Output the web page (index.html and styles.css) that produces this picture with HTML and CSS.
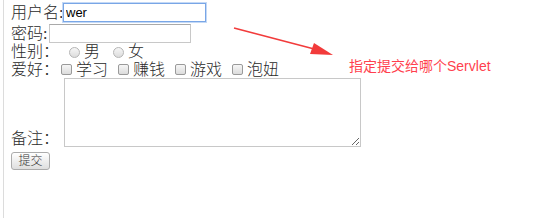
FILE: index.html
```html
<!DOCTYPE html>
<html lang="zh">
<head>
    <meta charset="UTF-8">
    <title>注册</title>
    <link rel="stylesheet" href="styles.css">
</head>
<body>
    <div class="page">
        <form class="reg-form" action="#">
            <div class="row row-user">
                <span class="label label-user">用户名:</span>
                <input type="text" class="field field-user" value="wer">
            </div>
            <div class="row row-pwd">
                <span class="label label-pwd">密码:</span>
                <input type="password" class="field field-pwd">
            </div>
            <div class="row row-sex">
                <span class="label">性别：</span>
                <input type="radio" name="sex" class="radio first">
                <span class="opt">男</span>
                <input type="radio" name="sex" class="radio">
                <span class="opt">女</span>
            </div>
            <div class="row row-hobby">
                <span class="label">爱好：</span>
                <input type="checkbox" class="check first">
                <span class="opt">学习</span>
                <input type="checkbox" class="check">
                <span class="opt">赚钱</span>
                <input type="checkbox" class="check">
                <span class="opt">游戏</span>
                <input type="checkbox" class="check">
                <span class="opt">泡妞</span>
            </div>
            <div class="row row-note">
                <span class="label">备注：</span>
                <textarea class="note"></textarea>
            </div>
            <div class="row row-submit">
                <button type="submit" class="submit">提交</button>
            </div>
        </form>

        <svg class="arrow" width="110" height="40" viewBox="0 0 110 40">
            <path d="M2 2 L86 24" stroke="#f23b3b" stroke-width="1.6" fill="none"/>
            <path d="M82 17 L101 29 L78 28 Z" fill="#f23b3b"/>
        </svg>
        <p class="note-text">指定提交给哪个Servlet</p>
    </div>
</body>
</html>
```

FILE: styles.css
```css
body {
    margin: 0;
    background: #fff;
    font-family: "Liberation Serif", "Noto Sans CJK SC", serif;
    color: #2a2a2a;
}
.page {
    position: relative;
    height: 218px;
    margin-left: 3px;
    border-left: 1px solid #dcdcdc;
    padding-left: 7px;
}
.reg-form {
    margin: 0;
    padding-top: 3px;
}
.row {
    display: flex;
    align-items: center;
}
.label,
.opt {
    font-size: 16px;
    line-height: 18px;
    font-weight: 300;
    white-space: nowrap;
}
.label {
    width: 48px;
}
.label-user {
    width: 52px;
}
.label-pwd {
    width: 38px;
}
.row-user {
    height: 19px;
}
.row-pwd {
    height: 19px;
    margin-top: 2px;
}
.row-sex {
    height: 18px;
}
.row-hobby {
    height: 17px;
}
.field {
    box-sizing: border-box;
    height: 19px;
    margin: 0;
    padding: 0 2px;
    border: 1px solid #c8c8c8;
    border-top-color: #a9a9a9;
    font-family: "Liberation Sans", Arial, sans-serif;
    font-size: 13px;
    color: #000;
    outline: none;
}
.field-user {
    width: 143px;
    border-color: #79a6e6;
    box-shadow: 0 0 0 1px #c4d9f6;
}
.field-pwd {
    width: 142px;
}
.radio,
.check {
    appearance: none;
    -webkit-appearance: none;
    box-sizing: border-box;
    width: 11px;
    height: 11px;
    margin: 0 4px 0 13px;
    border: 1px solid #b5b5b5;
    background: linear-gradient(#f6f6f6, #dcdcdc);
}
.radio {
    border-radius: 50%;
}
.radio.first {
    margin-left: 10px;
}
.check {
    border-radius: 2px;
    border-color: #9a9a9a;
    margin-left: 10px;
}
.check.first {
    margin-left: 2px;
}
.row-note {
    align-items: flex-end;
}
.row-note .label {
    width: 53px;
    line-height: 16px;
}
.note {
    box-sizing: border-box;
    width: 297px;
    height: 69px;
    margin: 0;
    border: 1px solid #c8c8c8;
    resize: both;
}
.row-submit {
    margin-top: 5px;
}
.submit {
    box-sizing: border-box;
    width: 39px;
    height: 18px;
    padding: 0;
    border: 1px solid #ababab;
    border-radius: 3px;
    background: linear-gradient(#ffffff, #dedede);
    font-family: "Liberation Serif", "Noto Sans CJK SC", serif;
    font-size: 12px;
    font-weight: 300;
    line-height: 16px;
    color: #333;
}
.arrow {
    position: absolute;
    left: 228px;
    top: 26px;
}
.note-text {
    position: absolute;
    left: 345px;
    top: 56px;
    margin: 0;
    font-family: "Liberation Sans", "Noto Sans CJK SC", sans-serif;
    font-size: 14px;
    line-height: 20px;
    color: #ff3f4e;
}
```
